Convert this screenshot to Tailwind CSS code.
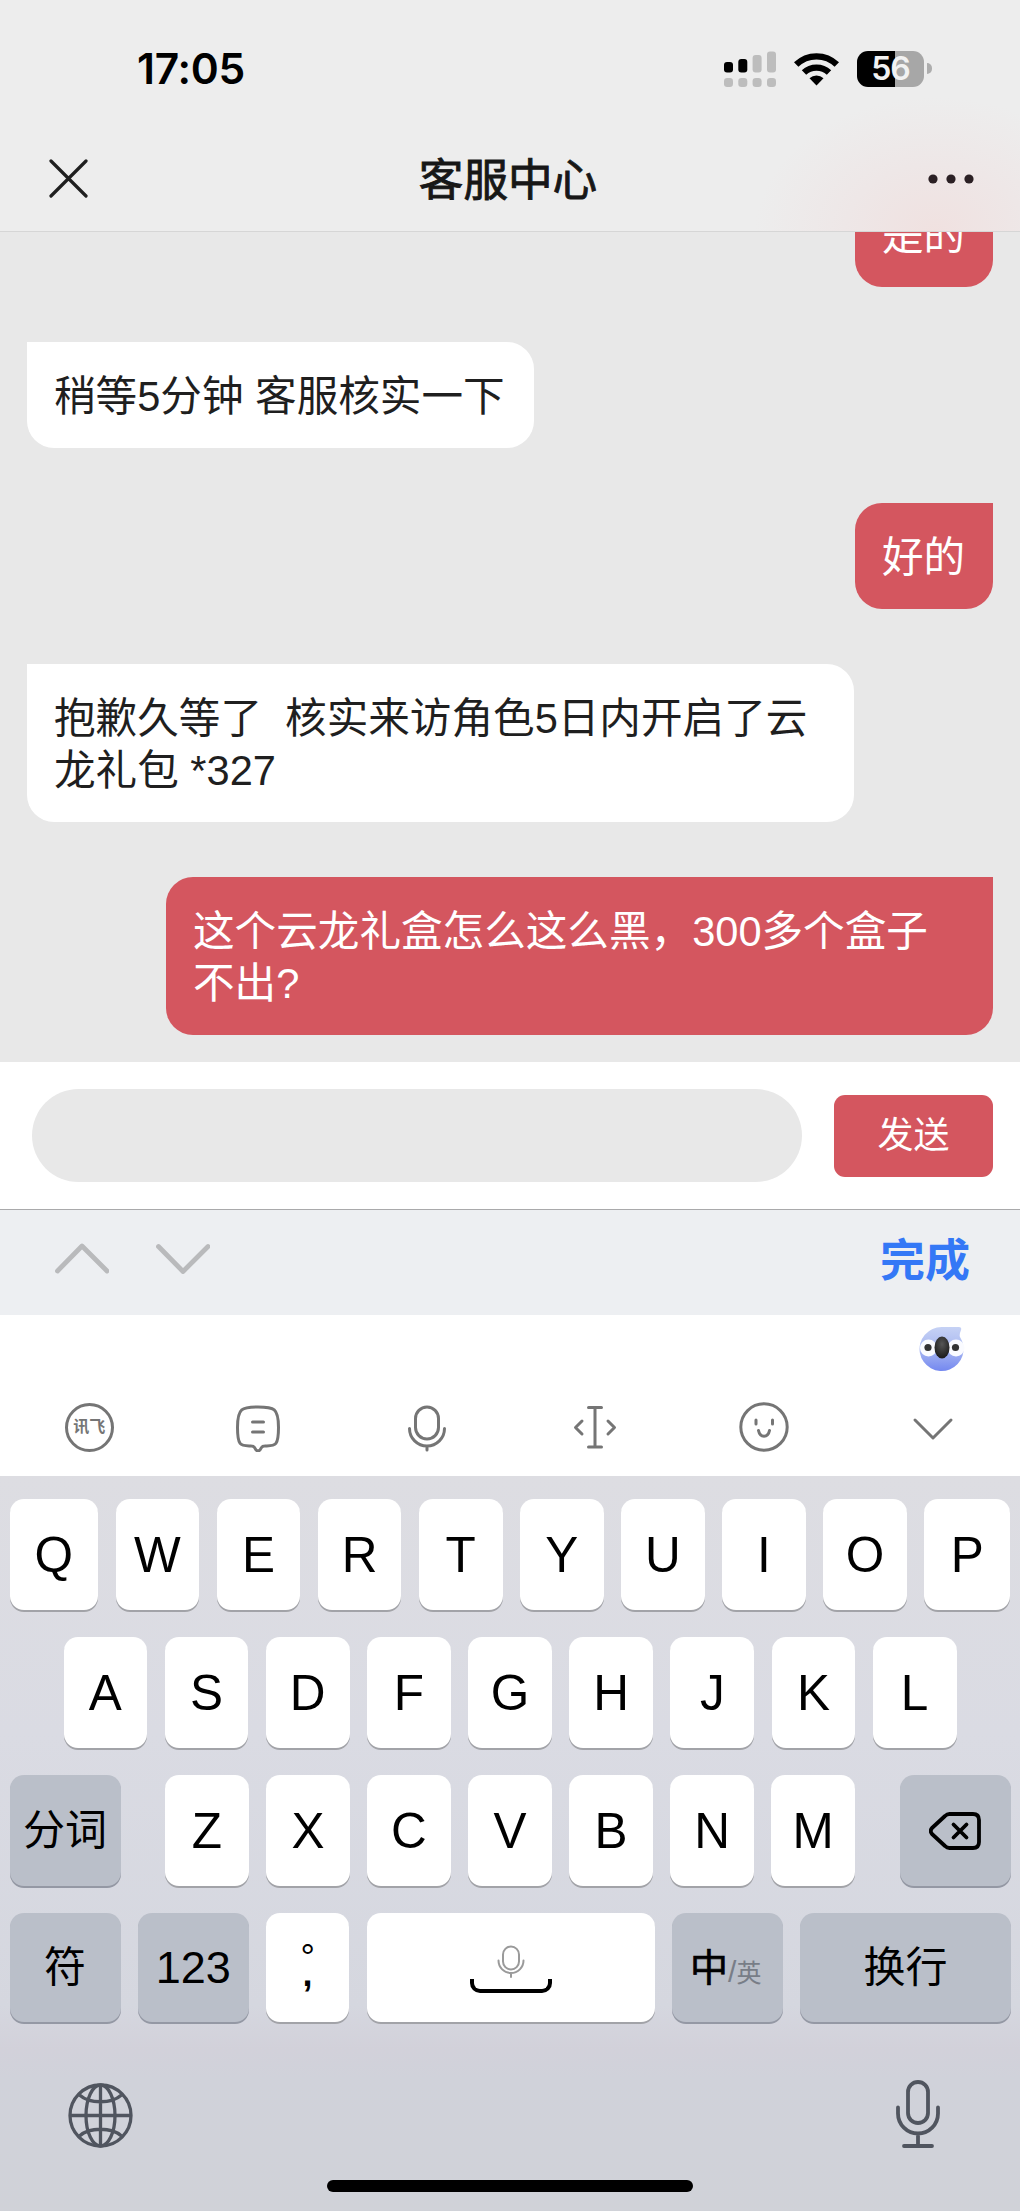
<!DOCTYPE html>
<html lang="zh-CN">
<head>
    <meta charset="UTF-8">
    <meta name="viewport" content="width=device-width, initial-scale=1.0">
    <title>客服中心</title>
    <script src="https://cdn.jsdelivr.net/npm/@tailwindcss/browser@4"></script>
</head>
<body class="w-[1020px] h-[2211px] overflow-hidden flex flex-col bg-[#e8e8e8] font-['Liberation_Sans','Noto_Sans_CJK_SC',sans-serif]">

    <!-- Status bar + title -->
    <header class="h-[232px] shrink-0 flex flex-col border-b border-[#d6d6d6] bg-[#ededed] bg-[radial-gradient(ellipse_180px_135px_at_935px_232px,#f0e1e0_0%,#eee7e7_50%,#ededed_100%)]">
        <div class="h-[137px] flex items-center justify-between pl-[137px] pr-[88px]">
            <div class="font-['Inter',sans-serif] font-semibold text-[42.500px] tracking-[-0.300px] leading-none text-black mt-[2px]">17:05</div>
            <div class="flex items-center">
                <svg class="w-[52px] h-[36px] mr-[18px]" viewBox="0 0 52 36">
                    <rect x="0" y="11" width="9" height="10.5" rx="3" fill="#000"/>
                    <rect x="14.3" y="8" width="9" height="13.5" rx="3" fill="#000"/>
                    <rect x="28.6" y="4" width="9" height="17.5" rx="3" fill="#bdbdbd"/>
                    <rect x="43" y="0.5" width="9" height="21" rx="3" fill="#bdbdbd"/>
                    <rect x="0" y="27" width="9" height="9" rx="3.2" fill="#bdbdbd"/>
                    <rect x="14.3" y="27" width="9" height="9" rx="3.2" fill="#bdbdbd"/>
                    <rect x="28.6" y="27" width="9" height="9" rx="3.2" fill="#bdbdbd"/>
                    <rect x="43" y="27" width="9" height="9" rx="3.2" fill="#bdbdbd"/>
                </svg>
                <svg class="w-[45px] h-[34px] mr-[18px]" viewBox="0 0 45 34" fill="none" stroke="#000" stroke-width="6.3">
                    <path d="M2.2 12.6a29 29 0 0 1 40.6 0"/>
                    <path d="M10 20.6a18 18 0 0 1 25 0"/>
                    <path d="M22.5 33.5l-7-7.2a10.3 10.3 0 0 1 14 0z" fill="#000" stroke="none"/>
                </svg>
                <div class="w-[67px] h-[36px] rounded-[11px] bg-[linear-gradient(90deg,#000_57%,#a7a7a7_57%)] flex items-center justify-center font-['Inter',sans-serif] font-semibold text-[32px] leading-none tracking-[-1px] text-[#f2f2f2]">56</div>
                <div class="ml-[3px] w-[5px] h-[11px] rounded-r-full bg-[#adadad]"></div>
            </div>
        </div>
        <div class="h-[84px] flex items-center justify-between pl-[49px] pr-[46px]">
            <svg class="w-[39px] h-[39px] mt-[-1px]" viewBox="0 0 39 39" stroke="#1f1f1f" stroke-width="3.2" stroke-linecap="round">
                <path d="M2 2l35 35M37 2L2 37"/>
            </svg>
            <h1 class="text-[44.600px] leading-none text-[#171717] mt-[4px] [-webkit-text-stroke:0.9px_#171717]">客服中心</h1>
            <svg class="w-[46px] h-[10px]" viewBox="0 0 46 10" fill="#2b2024">
                <circle cx="5" cy="5" r="4.6"/>
                <circle cx="23" cy="5" r="4.6"/>
                <circle cx="41" cy="5" r="4.6"/>
            </svg>
        </div>
    </header>

    <!-- Messages -->
    <main class="h-[830px] shrink-0 overflow-hidden flex flex-col justify-end gap-[55px] px-[27px] pb-[27px] text-[41.600px] leading-[52px] text-[#1f1f1f] *:shrink-0 *:px-[27px] *:pt-[29px] *:pb-[25px]">
        <div class="self-end w-[138px] rounded-[27px] rounded-tr-none bg-[#d4565f] text-white">是的</div>
        <div class="self-start w-[507px] rounded-[27px] rounded-tl-none bg-white whitespace-nowrap">稍等5分钟 客服核实一下</div>
        <div class="self-end w-[138px] rounded-[27px] rounded-tr-none bg-[#d4565f] text-white">好的</div>
        <div class="self-start w-[827px] rounded-[27px] rounded-tl-none bg-white whitespace-pre">抱歉久等了  核实来访角色5日内开启了云<br>龙礼包 *327</div>
        <div class="self-end w-[827px] rounded-[27px] rounded-tr-none bg-[#d4565f] text-white whitespace-pre">这个云龙礼盒怎么这么黑，300多个盒子<br>不出?</div>
    </main>

    <!-- Message input -->
    <div class="h-[147px] shrink-0 flex items-center justify-between bg-white pl-[32px] pr-[27px]">
        <div class="w-[770px] h-[93px] rounded-full bg-[#e8e8e8]"></div>
        <button class="w-[159px] h-[82px] rounded-[11px] bg-[#d4565f] text-white text-[36px] leading-none">发送</button>
    </div>

    <!-- Form accessory bar -->
    <div class="h-[106px] shrink-0 flex items-center justify-between border-t border-[#a9a9ab] bg-[#edeff2] pl-[55px] pr-[50px]">
        <div class="flex items-center gap-[47px] mt-[-9px]">
            <svg class="w-[54px] h-[32px]" viewBox="0 0 54 32" fill="none" stroke="#b9babc" stroke-width="4.8" stroke-linecap="round" stroke-linejoin="round">
                <path d="M2.5 29L27 4l25 25"/>
            </svg>
            <svg class="w-[54px] h-[32px]" viewBox="0 0 54 32" fill="none" stroke="#b9babc" stroke-width="4.8" stroke-linecap="round" stroke-linejoin="round">
                <path d="M2.5 4.5L27 29.5l25-25"/>
            </svg>
        </div>
        <div class="text-[45px] font-bold leading-none text-[#3478f6] mt-[-3px]">完成</div>
    </div>

    <!-- Keyboard toolbar -->
    <div class="h-[161px] shrink-0 bg-white flex flex-col">
        <div class="h-[66px] flex justify-end items-center pr-[54px] pt-[2px]">
            <svg class="w-[47px] h-[46px]" viewBox="0 0 47 46">
                <defs>
                    <linearGradient id="koala" x1="0" y1="0" x2="0" y2="1">
                        <stop offset="0" stop-color="#c6d2f5"/>
                        <stop offset="0.5" stop-color="#a9b8f1"/>
                        <stop offset="1" stop-color="#7488f0"/>
                    </linearGradient>
                    <radialGradient id="nose" cx="0.5" cy="0.35" r="0.6">
                        <stop offset="0" stop-color="#565656"/>
                        <stop offset="1" stop-color="#1f1f1f"/>
                    </radialGradient>
                </defs>
                <path d="M23 1h17q3 0 2 3q-2 5-1 7a22 22 0 1 1-18-10z" fill="url(#koala)"/>
                <circle cx="9.5" cy="22" r="8.5" fill="#fafbff"/>
                <circle cx="37" cy="22" r="8.5" fill="#fafbff"/>
                <circle cx="9" cy="21.5" r="3.6" fill="#333"/>
                <circle cx="36.5" cy="21.5" r="3.6" fill="#333"/>
                <ellipse cx="23" cy="21.5" rx="7.5" ry="11" fill="url(#nose)"/>
            </svg>
        </div>
        <div class="h-[92px] pl-[5px] pr-[3px] grid grid-cols-6 items-center justify-items-center">
            <div class="w-[49px] h-[49px] rounded-full border-3 border-[#757575] flex items-center justify-center text-[16px] leading-none font-bold text-[#757575]">讯飞</div>
            <svg class="w-[50px] h-[50px]" viewBox="0 0 50 50" fill="none" stroke="#757575" stroke-width="3" stroke-linecap="round" stroke-linejoin="round">
                <path d="M25 5c16 0 20.500 1 20.500 20.500S42 43.500 31.500 44q-2 0-3 1.500l-1.700 2.700q-1.800 1.500-3.600 0L21.500 45.500q-1-1.500-3-1.500C8 43.500 4.500 45 4.500 25.500S9 5 25 5z"/>
                <path d="M19.500 20h11M19.500 30h11"/>
            </svg>
            <svg class="w-[50px] h-[50px]" viewBox="0 0 50 50" fill="none" stroke="#757575" stroke-width="3" stroke-linecap="round">
                <rect x="13.5" y="5" width="23" height="32" rx="11.5"/>
                <path d="M7.5 26.500a17.500 17.500 0 0 0 35 0M25 44v4"/>
            </svg>
            <svg class="w-[50px] h-[50px]" viewBox="0 0 50 50" fill="none" stroke="#757575" stroke-width="3" stroke-linecap="round" stroke-linejoin="round">
                <path d="M18.500 5.500h13M18.500 45h13M25 5.500V45M12 19l-6.500 6.500L12 32M38 19l6.500 6.500L38 32"/>
            </svg>
            <svg class="w-[50px] h-[50px]" viewBox="0 0 50 50" fill="none" stroke="#757575" stroke-width="3" stroke-linecap="round">
                <circle cx="25" cy="25" r="23.2"/>
                <path d="M17 18v4M33.500 18v4M19.500 28.500c1.500 7.500 9.500 7.500 11 0"/>
            </svg>
            <svg class="w-[50px] h-[50px]" viewBox="0 0 50 50" fill="none" stroke="#757575" stroke-width="3" stroke-linecap="round" stroke-linejoin="round">
                <path d="M7 18l18 18 18-18"/>
            </svg>
        </div>
    </div>

    <!-- Keyboard -->
    <div class="h-[735px] shrink-0 flex flex-col bg-[linear-gradient(180deg,#dddde2_0%,#dadbe3_35%,#d5d7df_72%,#d2d1da_78%,#d0d2da_82%,#d0d2d8_100%)] text-black">
        <div class="pt-[23px] flex flex-col gap-[27px] px-[9.500px] text-[49.500px] leading-none">
            <div class="h-[111px] flex gap-[17.400px] *:flex-1 *:flex *:items-center *:justify-center *:rounded-[14px] *:bg-white *:shadow-[0_2px_0_#a2a3a8]">
                <div class="grow-[1.06]!">Q</div>
                <div>W</div>
                <div>E</div>
                <div>R</div>
                <div>T</div>
                <div>Y</div>
                <div>U</div>
                <div>I</div>
                <div>O</div>
                <div class="grow-[1.03]!">P</div>
            </div>
            <div class="h-[111px] px-[54px] flex gap-[17.400px] *:flex-1 *:flex *:items-center *:justify-center *:rounded-[14px] *:bg-white *:shadow-[0_2px_0_#a2a3a8]">
                <div>A</div>
                <div>S</div>
                <div>D</div>
                <div>F</div>
                <div>G</div>
                <div>H</div>
                <div>J</div>
                <div>K</div>
                <div>L</div>
            </div>
            <div class="h-[111px] flex justify-between">
                <div class="w-[111px] flex items-center justify-center rounded-[14px] bg-[#babfc9] shadow-[0_2px_0_#9498a4] text-[42px]">分词</div>
                <div class="w-[690px] flex gap-[17.400px] *:flex-1 *:flex *:items-center *:justify-center *:rounded-[14px] *:bg-white *:shadow-[0_2px_0_#a2a3a8]">
                    <div>Z</div>
                    <div>X</div>
                    <div>C</div>
                    <div>V</div>
                    <div>B</div>
                    <div>N</div>
                    <div>M</div>
                </div>
                <div class="w-[111px] flex items-center justify-center rounded-[14px] bg-[#babfc9] shadow-[0_2px_0_#9498a4]">
                    <svg class="w-[52px] h-[38px]" viewBox="0 0 52 38" fill="none" stroke="#000" stroke-width="3.8" stroke-linecap="round" stroke-linejoin="round">
                        <path d="M20.500 2H44q6 0 6 6v22q0 6-6 6H20.500q-2.500 0-4.500-2L3 22q-2.500-3 0-6L16 4q2-2 4.500-2z"/>
                        <path d="M24.500 12.500l13 13M37.500 12.500l-13 13"/>
                    </svg>
                </div>
            </div>
            <div class="h-[109px] flex gap-[17.200px] *:flex *:items-center *:justify-center *:rounded-[14px]">
                <div class="w-[111px] bg-[#babfc9] shadow-[0_2px_0_#9498a4] text-[42px]">符</div>
                <div class="w-[111px] bg-[#babfc9] shadow-[0_2px_0_#9498a4] text-[45px]">123</div>
                <div class="w-[83.500px] bg-white shadow-[0_2px_0_#a2a3a8] flex-col text-[36px] leading-[16px] pb-[4px]">
                    <span>°</span>
                    <span class="font-bold">,</span>
                </div>
                <div class="w-[288.500px] bg-white shadow-[0_2px_0_#a2a3a8] flex-col pt-[3px]">
                    <svg class="w-[28px] h-[34px]" viewBox="0 0 28 34" fill="none" stroke="#9a9a9a" stroke-width="2" stroke-linecap="round">
                        <rect x="6" y="1.500" width="16" height="23" rx="8"/>
                        <path d="M1.500 15.500a12.500 12.500 0 0 0 25 0M14 28.500V32"/>
                    </svg>
                    <div class="w-[82px] h-[14px] border-4 border-t-0 border-black rounded-b-[10px]"></div>
                </div>
                <div class="w-[111px] bg-[#babfc9] shadow-[0_2px_0_#9498a4]">
                    <span class="text-[38px] [-webkit-text-stroke:0.7px_#000] ml-[-4px]">中</span><span class="text-[25px] text-[#787d87] mt-[9px]"><span class="text-[30px]">/</span>英</span>
                </div>
                <div class="flex-1 bg-[#babfc9] shadow-[0_2px_0_#9498a4] text-[42px]">换行</div>
            </div>
        </div>
        <div class="mt-[58px] pl-[68px] pr-[79px] flex items-center justify-between">
            <svg class="w-[65px] h-[65px] mt-[3px]" viewBox="0 0 65 65" fill="none" stroke="#50555f" stroke-width="3.3">
                <circle cx="32.5" cy="32.5" r="30.5"/>
                <ellipse cx="32.5" cy="32.5" rx="14.5" ry="30.5"/>
                <path d="M32.500 2v61M2 32.500h61M11.500 12c10 9 32 9 42 0M11.500 53c10-9 32-9 42 0"/>
            </svg>
            <svg class="w-[46px] h-[68px]" viewBox="0 0 46 68" fill="none" stroke="#50555f" stroke-width="3.8" stroke-linecap="round">
                <rect x="13" y="2" width="20" height="41" rx="10"/>
                <path d="M3 27.500v6a20 20 0 0 0 40 0v-6M23 54v11M9 66h28"/>
            </svg>
        </div>
        <div class="mt-auto mb-[19px] mx-auto w-[366px] h-[12px] rounded-full bg-black"></div>
    </div>

</body>
</html>
